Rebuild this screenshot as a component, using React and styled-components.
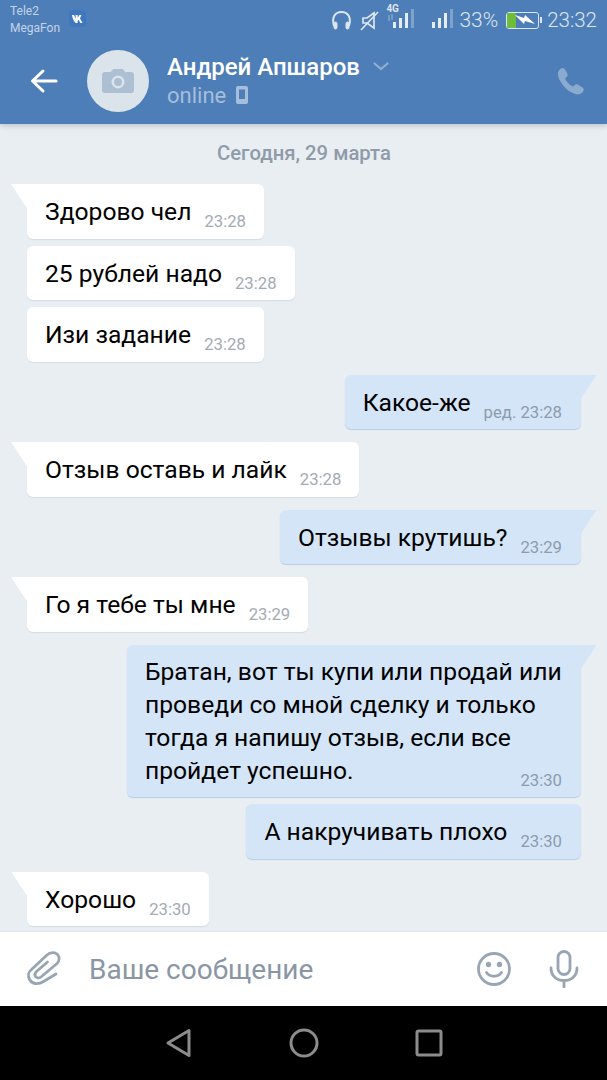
import styled, { createGlobalStyle } from 'styled-components'

const GlobalStyle = createGlobalStyle`
  html, body {
    margin: 0;
    padding: 0;
    background: #e9eef3;
  }
  * {
    box-sizing: border-box;
  }
`

const messages = [
  { id: 1, text: 'Здорово чел', time: '23:28', tail: true },
  { id: 2, text: '25 рублей надо', time: '23:28', near: true },
  { id: 3, text: 'Изи задание', time: '23:28', near: true },
  { id: 4, text: 'Какое-же', time: 'ред. 23:28', out: true, tail: true },
  { id: 5, text: 'Отзыв оставь и лайк', time: '23:28', tail: true },
  { id: 6, text: 'Отзывы крутишь?', time: '23:29', out: true, tail: true },
  { id: 7, text: 'Го я тебе ты мне', time: '23:29', tail: true },
  {
    id: 8,
    lines: [
      'Братан, вот ты купи или продай или',
      'проведи со мной сделку и только',
      'тогда я напишу отзыв, если все',
      'пройдет успешно.'
    ],
    time: '23:30',
    out: true,
    tail: true
  },
  { id: 9, text: 'А накручивать плохо', time: '23:30', out: true, near: true },
  { id: 10, text: 'Хорошо', time: '23:30', tail: true }
]

export default function App() {
  return (
    <Page>
      <GlobalStyle />
      <Header>
        <StatusBar>
          <Carriers>
            <span>Tele2</span>
            <span>MegaFon</span>
          </Carriers>
          <VkBadge>
            <svg width="12" height="8" viewBox="0 0 12 8">
              <path d="M0 0h2l1.600 4V0h2v3l1.800-3h2L8 3.600 10.600 8H8.400L6.600 4.800 5.600 6v2H3.800C2 7 .6 3.600 0 0z" fill="#fff" />
            </svg>
          </VkBadge>
          <StatusIcons>
            <svg width="19" height="21" viewBox="0 0 19 21" fill="none" stroke="#dce6f2" strokeWidth="2">
              <path d="M2 16C-.5 8 2.500 2 9.500 2s10 6 7.500 14" />
              <rect x="2" y="12" width="3" height="7" rx="1.500" fill="#dce6f2" strokeWidth="1" />
              <rect x="14" y="12" width="3" height="7" rx="1.500" fill="#dce6f2" strokeWidth="1" />
            </svg>
            <MuteIcon width="20" height="21" viewBox="0 0 20 21" fill="none" stroke="#dce6f2" strokeWidth="1.700">
              <path d="M3 8h4l7-5v15l-7-5H3z" />
              <path d="M1 20L18 2" />
            </MuteIcon>
            <SignalWithLabel>
              <NetLabel>4G</NetLabel>
              <NetArrows width="7" height="7" viewBox="0 0 7 7" fill="none" stroke="#8eaed3" strokeWidth="1.200">
                <path d="M2 7V1M5 0v6" />
              </NetArrows>
              <SignalBars />
            </SignalWithLabel>
            <SignalBars />
          </StatusIcons>
          <Percent>33%</Percent>
          <Battery>
            <BatteryFill />
            <svg width="20" height="12" viewBox="0 0 20 12">
              <path d="M0 1l9 3 1-3 10 9-10-3-1 3z" fill="#fff" />
            </svg>
          </Battery>
          <Clock>23:32</Clock>
        </StatusBar>
        <TitleBar>
          <IconSlot>
            <svg width="28" height="26" viewBox="0 0 28 26" fill="none" stroke="#fff" strokeWidth="3" strokeLinecap="round" strokeLinejoin="round">
              <path d="M26 13H3M13 3L2.500 13 13 23" />
            </svg>
          </IconSlot>
          <Avatar>
            <svg width="32" height="24" viewBox="0 0 32 24">
              <path
                fillRule="evenodd"
                d="M3 3h6l2-3h10l2 3h6a3 3 0 0 1 3 3v15a3 3 0 0 1-3 3H3a3 3 0 0 1-3-3V6a3 3 0 0 1 3-3zm13 3.500a6.500 6.500 0 1 0 0 13 6.500 6.500 0 0 0 0-13zm0 2.500a4 4 0 1 1 0 8 4 4 0 0 1 0-8z"
                fill="#adc0d3"
              />
            </svg>
          </Avatar>
          <Peer>
            <PeerName>
              Андрей Апшаров
              <svg width="16" height="9" viewBox="0 0 16 9" fill="none" stroke="#8fadd0" strokeWidth="2.200" strokeLinecap="round">
                <path d="M1.500 1.500L8 7l6.500-5.500" />
              </svg>
            </PeerName>
            <PeerStatus>
              online
              <svg width="12" height="18" viewBox="0 0 12 18">
                <path
                  fillRule="evenodd"
                  d="M2 0h8a2 2 0 0 1 2 2v14a2 2 0 0 1-2 2H2a2 2 0 0 1-2-2V2a2 2 0 0 1 2-2zm1 3.500V13h6V3.500z"
                  fill="#a5bedb"
                />
              </svg>
            </PeerStatus>
          </Peer>
          <svg width="28" height="28" viewBox="0 0 28 28">
            <path
              d="M4 1.500C5.500.5 7 .8 8 2.500l2.300 4c.7 1.300.4 2.500-.7 3.400L8 11.200c1.300 3.300 4 6.500 8 8.500l1.700-1.600c1-1 2.300-1.100 3.500-.4l4 2.500c1.600 1 2 2.500 1 4-1.500 2.300-3.700 3.600-6.500 3-5.500-1.200-10.500-4.500-14-9.500C2.300 13.500.8 9.500 1 6.500 1 4.500 2.300 2.600 4 1.500z"
              fill="#8aaad0"
            />
          </svg>
        </TitleBar>
      </Header>

      <Feed>
        <DateLabel>Сегодня, 29 марта</DateLabel>
        {messages.map(message => (
          <Bubble
            key={message.id}
            $out={message.out}
            $near={message.near}
            $tail={message.tail}
          >
            {message.lines ? (
              <Lines>
                {message.lines.map(line => (
                  <div key={line}>{line}</div>
                ))}
                <BlockTime $out>{message.time}</BlockTime>
              </Lines>
            ) : (
              <>
                <BubbleText>{message.text}</BubbleText>
                <Time $out={message.out}>{message.time}</Time>
              </>
            )}
          </Bubble>
        ))}
      </Feed>

      <Composer>
        <svg width="36" height="38" viewBox="0 0 36 38" fill="none" stroke="#98a6b4" strokeWidth="2.800" strokeLinecap="round">
          <path d="M30 24L17.500 31.500C12 35 6 34 3.500 29.500C1.500 26 2.500 22 5.500 19.500L21 5C24.500 1.800 29 2 31.500 4.500C34 7 33.500 11 31 13.500L15 27C13 28.500 10.500 28 9.500 26.500C8.500 25 9 23 10.500 21.500L21.500 12" />
        </svg>
        <Placeholder>Ваше сообщение</Placeholder>
        <svg width="36" height="36" viewBox="0 0 36 36" fill="none" stroke="#98a6b4" strokeWidth="2.800" strokeLinecap="round">
          <circle cx="18" cy="18" r="15.500" />
          <path d="M10.500 21.500c3.500 5 11.500 5 15 0" />
          <circle cx="12.500" cy="13.500" r="1.300" fill="#98a6b4" />
          <circle cx="23.500" cy="13.500" r="1.300" fill="#98a6b4" />
        </svg>
        <MicIcon width="30" height="38" viewBox="0 0 30 38" fill="none" stroke="#98a6b4" strokeWidth="2.800" strokeLinecap="round">
          <rect x="9" y="1.500" width="12" height="23" rx="6" />
          <path d="M2 18c0 8 5.500 12.500 13 12.500S28 26 28 18M15 30.500V37" />
        </MicIcon>
      </Composer>

      <NavBar>
        <svg width="28" height="30" viewBox="0 0 28 30" fill="none" stroke="#8c8c8c" strokeWidth="3" strokeLinejoin="round">
          <path d="M24 2.500v25L3 15z" />
        </svg>
        <svg width="30" height="30" viewBox="0 0 30 30" fill="none" stroke="#8c8c8c" strokeWidth="3">
          <circle cx="15" cy="15" r="13" />
        </svg>
        <svg width="28" height="28" viewBox="0 0 28 28" fill="none" stroke="#8c8c8c" strokeWidth="3" strokeLinejoin="round">
          <rect x="2" y="2" width="24" height="24" rx="1.500" />
        </svg>
      </NavBar>
    </Page>
  )
}

const SignalBars = () => (
  <BarsRow>
    <Bar $h={6} />
    <Bar $h={10} />
    <Bar $h={15} />
    <Bar $h={19} $dim />
  </BarsRow>
)

const Page = styled.div`
  width: 607px;
  height: 1080px;
  display: flex;
  flex-direction: column;
  overflow: hidden;
  font-family: Roboto, 'Noto Sans', sans-serif;
`

const Header = styled.header`
  flex: 0 0 124px;
  display: flex;
  flex-direction: column;
  background: #4e7eb7;
  box-shadow: 0 2px 5px rgba(60, 80, 100, 0.25);
  position: relative;
  z-index: 1;
`

const StatusBar = styled.div`
  height: 40px;
  display: flex;
  align-items: center;
  padding: 0 10px;
  color: #dce6f2;
`

const Carriers = styled.div`
  display: flex;
  flex-direction: column;
  font-size: 12px;
  line-height: 17px;
  color: #c3d4e8;
`

const VkBadge = styled.div`
  width: 17px;
  height: 17px;
  margin: 0 0 3px 9px;
  border-radius: 4px;
  background: #3f78c0;
  display: flex;
  align-items: center;
  justify-content: center;
`

const StatusIcons = styled.div`
  margin-left: auto;
  display: flex;
  align-items: center;
  gap: 9px;
`

const MuteIcon = styled.svg`
  margin-right: 4px;
`

const SignalWithLabel = styled.div`
  position: relative;
  margin-right: 9px;
`

const NetLabel = styled.span`
  position: absolute;
  top: -5px;
  left: -7px;
  font-size: 10px;
  line-height: 10px;
  font-weight: 700;
  color: #dce6f2;
`

const NetArrows = styled.svg`
  position: absolute;
  top: 5px;
  left: -6px;
`

const BarsRow = styled.div`
  display: flex;
  align-items: flex-end;
  gap: 3px;
  height: 19px;
  margin-bottom: 3px;
`

const Bar = styled.div`
  width: 3px;
  height: ${({ $h }) => $h}px;
  background: ${({ $dim }) => ($dim ? '#7fa2cb' : '#e6edf5')};
`

const Percent = styled.span`
  font-size: 21px;
  font-weight: 300;
  line-height: 24px;
  margin-left: 6px;
`

const Clock = styled.span`
  font-size: 20.500px;
  font-weight: 300;
  line-height: 24px;
`

const Battery = styled.div`
  width: 33px;
  height: 17px;
  margin-left: 8px;
  margin-right: 8px;
  border: 1.500px solid #dce6f2;
  border-radius: 3px;
  position: relative;
  display: flex;
  align-items: center;

  svg {
    position: absolute;
    left: 8px;
    top: 1.500px;
  }

  &::after {
    content: '';
    position: absolute;
    right: -4px;
    top: 4px;
    width: 2px;
    height: 6px;
    background: #dce6f2;
  }
`

const BatteryFill = styled.div`
  width: 9px;
  height: 100%;
  background: #6ebd3a;
`

const TitleBar = styled.div`
  flex: 1;
  display: flex;
  align-items: center;
  padding: 0 22px 2px 30px;
`

const IconSlot = styled.div`
  width: 57px;
  display: flex;
`

const Avatar = styled.div`
  width: 62px;
  height: 62px;
  border-radius: 50%;
  background: #dbe4eb;
  display: flex;
  align-items: center;
  justify-content: center;
`

const Peer = styled.div`
  flex: 1;
  margin: 0 0 2px 18px;
  display: flex;
  flex-direction: column;
`

const PeerName = styled.div`
  display: flex;
  align-items: center;
  gap: 13px;
  font-size: 24px;
  font-weight: 500;
  line-height: 30px;
  color: #fff;
`

const PeerStatus = styled.div`
  display: flex;
  align-items: center;
  gap: 10px;
  font-size: 22px;
  line-height: 27px;
  color: #a5bedb;
`

const Feed = styled.main`
  flex: 1;
  min-height: 0;
  overflow: hidden;
  display: flex;
  flex-direction: column;
  align-items: flex-start;
  padding: 0 26px 0 27px;
  background: #e9eef3;
`

const DateLabel = styled.div`
  align-self: center;
  flex: none;
  height: 60px;
  padding-top: 18px;
  font-size: 20.300px;
  font-weight: 500;
  line-height: 22px;
  color: #8f9ba8;
`

const Bubble = styled.div`
  position: relative;
  flex: none;
  display: flex;
  align-items: flex-start;
  gap: 13px;
  min-height: 54.500px;
  margin-top: ${({ $near }) => ($near ? '7px' : '13px')};
  padding: 12px ${({ $out }) => ($out ? '19px' : '18px')} 0 18px;
  border-radius: 6px;
  align-self: ${({ $out }) => ($out ? 'flex-end' : 'flex-start')};
  background: ${({ $out }) => ($out ? '#d5e5f8' : '#fff')};
  box-shadow: 0 1px 1px ${({ $out }) => ($out ? '#b9cde3' : '#d4dce4')};

  &:nth-child(2) {
    margin-top: 0;
  }

  ${({ $tail, $out }) =>
    $tail &&
    `
    &::before {
      content: '';
      position: absolute;
      top: 0;
      ${$out ? 'right: -16px;' : 'left: -16px;'}
      width: 22px;
      height: 24px;
      background: ${$out ? '#d5e5f8' : '#fff'};
      clip-path: polygon(${
        $out
          ? '0 0, 100% 0, 28% 100%, 0 100%'
          : '0 0, 100% 0, 100% 100%, 72% 100%'
      });
    }
    ${$out ? 'border-top-right-radius: 0;' : 'border-top-left-radius: 0;'}
  `}
`

const BubbleText = styled.div`
  font-size: 24.650px;
  line-height: 32px;
  color: #000;
  white-space: nowrap;
`

const Time = styled.span`
  align-self: flex-end;
  margin-bottom: 6.500px;
  font-size: 16.700px;
  line-height: 20px;
  white-space: nowrap;
  color: ${({ $out }) => ($out ? '#8c9cad' : '#a3abb3')};
`

const Lines = styled.div`
  width: 417px;
  margin-top: -2px;
  padding-bottom: 6.500px;
  font-size: 24.650px;
  line-height: 33px;
  color: #000;
  white-space: nowrap;
`

const BlockTime = styled(Time)`
  display: block;
  margin: -16px 0 0;
  text-align: right;
`

const Composer = styled.footer`
  flex: 0 0 75px;
  display: flex;
  align-items: center;
  padding: 0 28px 0 26px;
  background: #fff;
  border-top: 1px solid #dfe4e8;
`

const Placeholder = styled.div`
  flex: 1;
  margin-left: 27px;
  padding-top: 1px;
  font-size: 28px;
  color: #8a96a3;
`

const MicIcon = styled.svg`
  margin-left: 37px;
`

const NavBar = styled.nav`
  flex: 0 0 74px;
  display: flex;
  align-items: center;
  justify-content: center;
  gap: 96px;
  background: #000;
`
